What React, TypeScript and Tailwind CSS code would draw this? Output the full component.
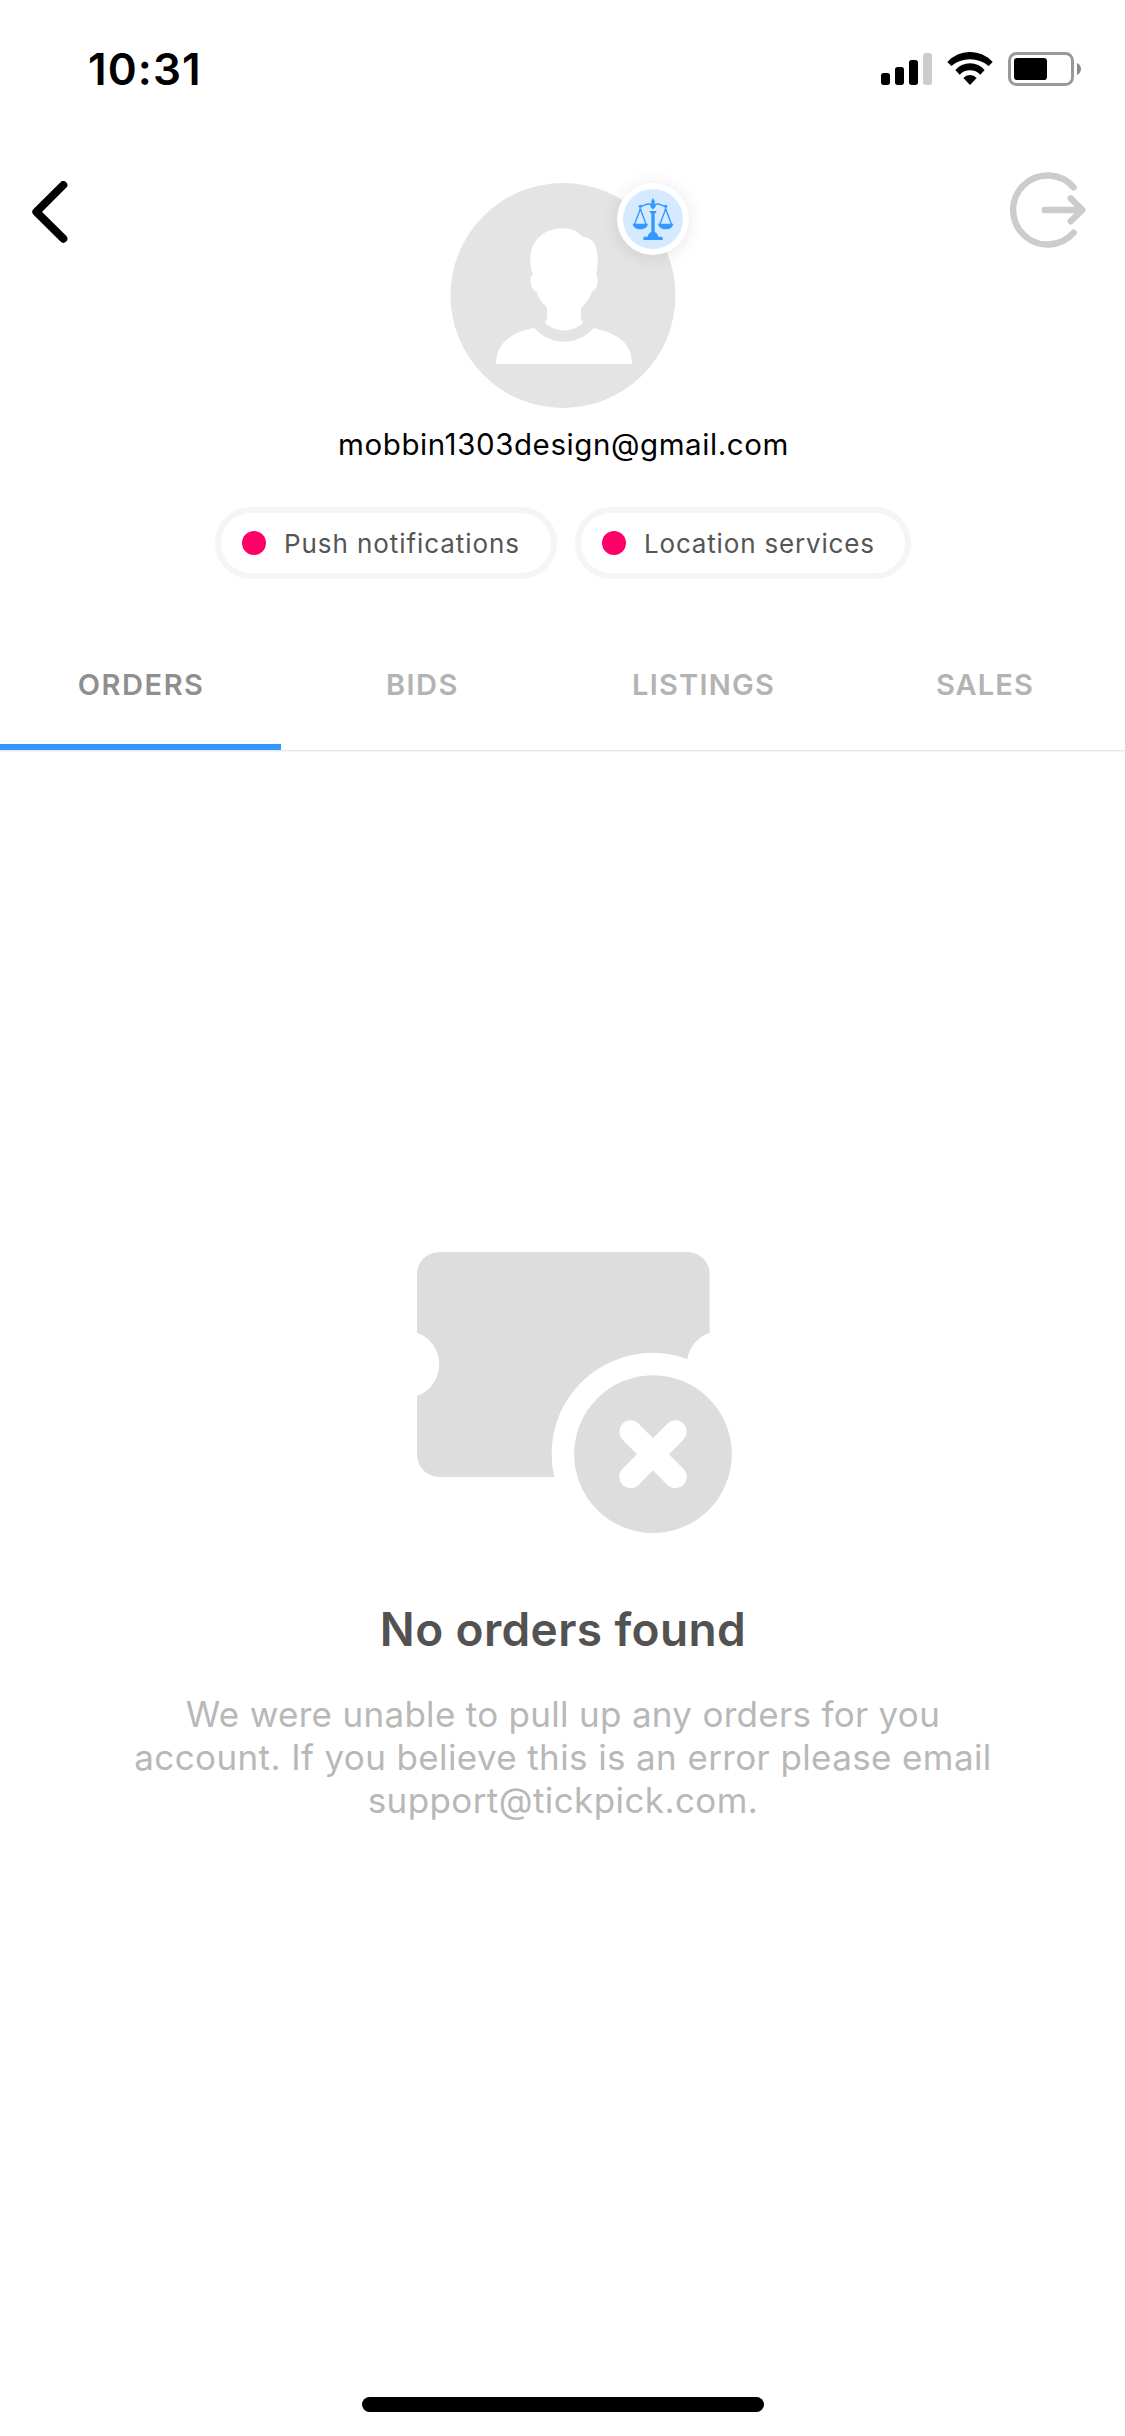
import clsx from "clsx";

const TABS = [
  { label: "ORDERS", tracking: "tracking-[1.55px]", active: true },
  { label: "BIDS", tracking: "tracking-[1.5px]", active: false },
  { label: "LISTINGS", tracking: "tracking-[1.25px]", active: false },
  { label: "SALES", tracking: "tracking-[1.1px]", active: false },
];

function StatusIcons() {
  return (
    <svg viewBox="123 96 600 102" className="h-[34px] w-[200px]">
      {/* Signal */}
      <rect x="123" y="159" width="27" height="36" rx="8" />
      <rect x="165" y="141" width="27" height="54" rx="8" />
      <rect x="207" y="120" width="27" height="75" rx="8" />
      <rect x="249" y="99" width="27" height="96" rx="8" fill="#cccccc" />
      {/* Wi-Fi */}
      <path d="M322 126A92 92 0 0 1 458 126L446 138A88 88 0 0 0 334 138Z" />
      <path d="M346 150A58 58 0 0 1 434 150L421 164A43 43 0 0 0 359 164Z" />
      <path d="M370 174A27 27 0 0 1 410 174L390 195Z" />
      {/* Battery */}
      <rect x="508.5" y="100.5" width="189" height="93" rx="21" fill="none" stroke="#999999" strokeWidth="9" />
      <rect x="522" y="114" width="99" height="66" rx="10" />
      <path d="M711 129C727 136 727 158 711 165Z" fill="#8c8c8c" />
    </svg>
  );
}

function BackIcon() {
  return (
    <svg viewBox="96 483 108 186" className="h-[62px] w-9">
      <path
        d="M190 495L109 575.5L190 656"
        fill="none"
        stroke="black"
        strokeWidth="24"
        strokeLinecap="round"
        strokeLinejoin="round"
      />
    </svg>
  );
}

function LogoutIcon() {
  return (
    <svg
      viewBox="507 456 228 228"
      className="size-[76px]"
      fill="none"
      stroke="#cccccc"
      strokeWidth="19"
      strokeLinecap="round"
      strokeLinejoin="round"
    >
      <path d="M698 502A103.500 103.500 0 1 0 698 638" />
      <path d="M611 570H723M689 535L724 570L689 604" />
    </svg>
  );
}

function ScalesIcon() {
  return (
    <svg viewBox="579 87 180 180" className="size-[60px]" fill="#3399ff">
      {/* Finial and beam */}
      <path d="M669 115C676 124 675 129 673 132C679 136 679 142 669 148C659 142 659 136 665 132C663 129 662 124 669 115Z" />
      <path
        d="M631 139C642 139 646 131 657 132C663 133 664 136 669 136C674 136 675 133 681 132C692 131 696 139 707 139"
        fill="none"
        stroke="#3399ff"
        strokeWidth="4.5"
      />
      <circle cx="631" cy="139" r="5" />
      <circle cx="707" cy="139" r="5" />
      {/* Pans */}
      <path
        d="M631 147L614 192M631 147L648 192M707 147L690 192M707 147L724 192"
        fill="none"
        stroke="#3399ff"
        strokeWidth="4.2"
      />
      <circle cx="631" cy="148" r="3.5" />
      <circle cx="707" cy="148" r="3.500" />
      <path d="M608 191H654C652 202 643 208 631 208C619 208 610 202 608 191Z" />
      <path d="M684 191H730C728 202 719 208 707 208C695 208 686 202 684 191Z" />
      {/* Column and base */}
      <path d="M659 153H679V157L674 161V216C681 219 684 224 685 230H694Q698 230 698 234V240H640V234Q640 230 644 230H653C654 224 657 219 664 216V161L659 157Z" />
    </svg>
  );
}

function Avatar() {
  return (
    <div className="relative mt-[11px] size-[225px]">
      <svg viewBox="60 69 675 675" className="size-[225px] overflow-visible">
        <circle cx="399" cy="406.5" r="337.5" fill="#e4e4e4" />
        <path
          fill="white"
          d="M301 300C300 245 337 206 400 205C425 205 441 213 458 231C486 232 503 252 503 298C503 318 502 332 498 345C508 352 503 389 486 394C480 413 470 430 453 443V478L459 488C425 519 380 519 345 488L351 478V443C335 430 325 413 319 394C303 390 294 352 309 345C303 331 301 315 301 300Z"
        />
        <path fill="white" d="M313 504C362 559 442 559 491 504C562 521 606 547 606 612H198C199 549 243 517 313 504Z" />
      </svg>
      <div className="absolute top-0 left-[167px] flex size-[72px] items-center justify-center rounded-full bg-white shadow-[0_2px_18px_rgba(0,0,0,0.1)]">
        <div className="size-[60px] rounded-full bg-[#d6eaff]">
          <ScalesIcon />
        </div>
      </div>
    </div>
  );
}

function PermissionPill({ label, className }: { label: string; className: string }) {
  return (
    <button
      className={clsx(
        "flex h-[72px] items-center rounded-full border-6 border-[#f5f5f5] pl-[21px] text-[26px] whitespace-nowrap text-[#555555]",
        className,
      )}
    >
      <span className="mr-[18px] size-6 shrink-0 rounded-full bg-[#ff0066]" />
      {label}
    </button>
  );
}

function TicketIcon() {
  return (
    <svg viewBox="79 66 876 843" className="h-[281px] w-[292px] overflow-visible" fill="#dddddd">
      <path d="M146 66H890A67 67 0 0 1 957 133V308A101 101 0 0 0 890 387A303 303 0 0 0 491 741H146A67 67 0 0 1 79 674V498A101 101 0 0 0 79 308V133A67 67 0 0 1 146 66Z" />
      <circle cx="787" cy="672.5" r="236.5" />
      <path d="M720 605L854 740M854 605L720 740" stroke="white" strokeWidth="68" strokeLinecap="round" />
    </svg>
  );
}

export default function App() {
  return (
    <div className="flex h-[2436px] w-[1125px] flex-col items-center bg-white font-['Inter',sans-serif] text-black">
      <div className="flex h-[138px] w-full items-center justify-between pr-11 pl-[88px]">
        <span className="text-[44px] font-semibold tracking-[1.1px]">10:31</span>
        <StatusIcons />
      </div>

      <header className="grid w-full grid-cols-[1fr_225px_1fr] items-start pt-[34px]">
        <button className="mt-[9px] ml-8 justify-self-start">
          <BackIcon />
        </button>
        <Avatar />
        <button className="mr-[39px] justify-self-end">
          <LogoutIcon />
        </button>
      </header>

      <p className="mt-[18px] pl-[2px] text-[29.5px] leading-9 tracking-[0.58px]">mobbin1303design@gmail.com</p>

      <div className="mt-[45px] flex gap-[18px] pl-px">
        <PermissionPill label="Push notifications" className="w-[342px] tracking-[0.93px]" />
        <PermissionPill label="Location services" className="w-[336px] tracking-[0.82px]" />
      </div>

      <nav className="mt-[39px] grid w-full grid-cols-4 border-b border-[#e9e9e9] shadow-[0_1px_1px_rgba(0,0,0,0.04)]">
        {TABS.map(({ label, tracking, active }) => (
          <button
            key={label}
            className={clsx(
              "flex h-[132px] items-center justify-center pt-[2px] pl-px text-[29px] font-semibold",
              tracking,
              active ? "text-[#8f8f8f] shadow-[inset_0_-6px_0_#3399ff]" : "text-[#b3b3b3]",
            )}
          >
            {label}
          </button>
        ))}
      </nav>

      <main className="mt-[501px] flex flex-col items-center pl-px text-center">
        <TicketIcon />
        <h1 className="mt-[68px] text-[46px] leading-[56px] font-semibold tracking-[0.38px] text-[#525252]">
          No orders found
        </h1>
        <p className="mt-9 text-[35px] leading-[43px] text-[#b8b8b8]">
          <span className="block tracking-[0.3px]">We were unable to pull up any orders for you</span>
          <span className="block tracking-[0.38px]">account. If you believe this is an error please email</span>
          <span className="block tracking-[0.41px]">support@tickpick.com.</span>
        </p>
      </main>

      <div className="mt-auto mb-6 h-[15px] w-[402px] rounded-full bg-black" />
    </div>
  );
}
